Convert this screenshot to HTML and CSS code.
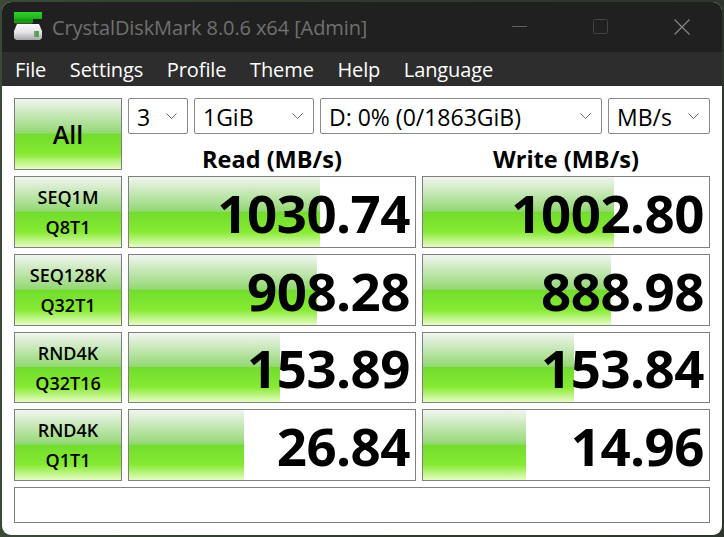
FILE: index.html
```html
<!DOCTYPE html>
<html lang="en">
<head>
<meta charset="utf-8">
<title>CrystalDiskMark</title>
<link rel="stylesheet" href="styles.css">
</head>
<body>
<div class="window">
  <header class="titlebar">
    <svg class="app-icon" width="28" height="28" viewBox="0 0 28 28">
      <defs>
        <linearGradient id="disk" x1="0" y1="0" x2="0" y2="1"><stop offset="0" stop-color="#fbfbfb"/><stop offset=".5" stop-color="#e4e4ea"/><stop offset="1" stop-color="#a6a6a6"/></linearGradient>
        <linearGradient id="top" x1="0" y1="0" x2="0" y2="1"><stop offset="0" stop-color="#2fd02a"/><stop offset="1" stop-color="#1fae1c"/></linearGradient>
      </defs>
      <rect x="0" y="0" width="28" height="7" fill="url(#top)"/>
      <rect x="0" y="7" width="19" height="4" fill="#159a14"/>
      <rect x="1" y="11" width="17" height="1" fill="#3c4a3a"/>
      <path d="M3 12h22l3 7v7l-2 2H2l-2-2v-7z" fill="url(#disk)"/>
      <rect x="20" y="19" width="5" height="6" fill="#7d9f74"/>
      <rect x="22" y="19" width="2" height="6" fill="#3da93a"/>
    </svg>
    <span class="app-title">CrystalDiskMark 8.0.6 x64 [Admin]</span>
    <div class="window-controls">
      <svg width="16" height="16" viewBox="0 0 16 16"><path d="M0 7.5h15" stroke="#5f5f5f" fill="none"/></svg>
      <svg width="16" height="16" viewBox="0 0 16 16"><rect x=".5" y=".5" width="14" height="14" rx="2" stroke="#444" fill="none"/></svg>
      <svg width="16" height="16" viewBox="0 0 16 16"><path d="M.5.5l15 15M15.5.5l-15 15" stroke="#8a8a8a" stroke-width="1.1" fill="none"/></svg>
    </div>
  </header>
  <nav class="menubar">
    <span>File</span><span>Settings</span><span>Profile</span><span>Theme</span><span>Help</span><span>Language</span>
  </nav>
  <main class="client">
    <div class="grid">
      <button class="cell btn all">All</button>
      <div class="controls">
        <div class="combos">
          <div class="combo c-count"><span>3</span><svg class="chev" width="11" height="6" viewBox="0 0 11 6"><path d="M.5.5l5 5 5-5" stroke="#666" fill="none"/></svg></div>
          <div class="combo c-size"><span>1GiB</span><svg class="chev" width="11" height="6" viewBox="0 0 11 6"><path d="M.5.5l5 5 5-5" stroke="#666" fill="none"/></svg></div>
          <div class="combo c-drive"><span>D: 0% (0/1863GiB)</span><svg class="chev" width="11" height="6" viewBox="0 0 11 6"><path d="M.5.5l5 5 5-5" stroke="#666" fill="none"/></svg></div>
          <div class="combo c-unit"><span>MB/s</span><svg class="chev" width="11" height="6" viewBox="0 0 11 6"><path d="M.5.5l5 5 5-5" stroke="#666" fill="none"/></svg></div>
        </div>
        <div class="headings">
          <div class="heading">Read (MB/s)</div>
          <div class="heading">Write (MB/s)</div>
        </div>
      </div>

      <button class="cell btn test"><span>SEQ1M</span><span>Q8T1</span></button>
      <div class="cell meter"><div class="fill" style="width:66.8%"></div><span class="val">1030.74</span></div>
      <div class="cell meter"><div class="fill" style="width:66.8%"></div><span class="val">1002.80</span></div>

      <button class="cell btn test"><span>SEQ128K</span><span>Q32T1</span></button>
      <div class="cell meter"><div class="fill" style="width:65.7%"></div><span class="val">908.28</span></div>
      <div class="cell meter"><div class="fill" style="width:65.7%"></div><span class="val">888.98</span></div>

      <button class="cell btn test"><span>RND4K</span><span>Q32T16</span></button>
      <div class="cell meter"><div class="fill" style="width:52.8%"></div><span class="val">153.89</span></div>
      <div class="cell meter"><div class="fill" style="width:52.8%"></div><span class="val">153.84</span></div>

      <button class="cell btn test"><span>RND4K</span><span>Q1T1</span></button>
      <div class="cell meter"><div class="fill" style="width:40.2%"></div><span class="val">26.84</span></div>
      <div class="cell meter"><div class="fill" style="width:36%"></div><span class="val">14.96</span></div>
    </div>
    <div class="status"></div>
  </main>
</div>
</body>
</html>
```
FILE: styles.css
```css
* { box-sizing: border-box; }
html, body { margin: 0; height: 100%; }
body {
  width: 724px; height: 537px; overflow: hidden;
  background: linear-gradient(90deg, #3a4a36, #2f3b2c 50%, #2c362a);
  padding: 2px 2px 2px 2px;
  font-family: "Open Sans", "Noto Sans", sans-serif;
}
.window {
  height: 100%; display: flex; flex-direction: column;
  border-radius: 9px; overflow: hidden; background: #fff;
}
.titlebar {
  height: 50px; flex: none; background: #202020;
  display: flex; align-items: center; padding: 0 0 0 12px;
}
.app-icon { flex: none; align-self: flex-start; margin-top: 10px; }
.app-title { margin-left: 10px; font-size: 20px; color: #707070; white-space: nowrap; letter-spacing: -.1px; }
.window-controls { margin-left: auto; display: flex; align-items: center; gap: 65px; padding-right: 32px; }
.menubar {
  height: 34px; flex: none; background: #2d2d2d; color: #fff;
  display: flex; align-items: center; gap: 23.6px; padding: 0 0 0 13px;
  font-size: 20px; letter-spacing: -.1px;
}
.client { flex: 1; padding: 12px 12px 11px 12px; display: flex; flex-direction: column; gap: 6px; }
.grid { display: grid; grid-template-columns: 108px 288px 288px; grid-template-rows: 72px 72px 72px 71px 72px; gap: 6px; }
.cell { border: 1px solid #808080; }
.btn {
  margin: 0; padding: 0; font-family: inherit; color: #000; font-weight: 600;
  background: linear-gradient(180deg, #f1f5f0 0%, #93d873 49%, #72dc2e 50%, #86ea32 78%, #e6fcc4 100%);
}
.all { font-size: 25px; }
.test { display: flex; flex-direction: column; align-items: center; justify-content: center; gap: 8px; font-size: 18px; line-height: 22px; }
.controls { grid-column: 2 / 4; display: flex; flex-direction: column; }
.combos { display: flex; gap: 6px; height: 36px; }
.combo {
  border: 1px solid #8a8a8a; border-radius: 2px; height: 36px; background: #fff;
  display: flex; align-items: center; justify-content: space-between;
  padding: 1px 10px 0 8px; font-size: 23px; color: #000;
}
.chev { margin-top: -1px; }
.c-count { width: 60px; }
.c-size { width: 120px; }
.c-drive { width: 282px; }
.c-unit { width: 102px; }
.headings { display: grid; grid-template-columns: 288px 288px; column-gap: 6px; }
.heading { font-size: 23.5px; font-weight: 700; text-align: center; line-height: 36px; color: #000; padding-top: 7px; white-space: nowrap; }
.meter { position: relative; background: #fff; display: flex; align-items: center; justify-content: flex-end; padding: 2px 5px 0 0; }
.fill {
  position: absolute; left: 0; top: 0; bottom: 0;
  background: linear-gradient(180deg, #f1f5f0 0%, #93d873 49%, #72dc2e 50%, #86ea32 78%, #e6fcc4 100%);
}
.val { position: relative; font-size: 52.8px; font-weight: 700; line-height: 1; color: #000; letter-spacing: -.5px; }
.status { border: 1px solid #808080; height: 36px; width: 696px; }
```
